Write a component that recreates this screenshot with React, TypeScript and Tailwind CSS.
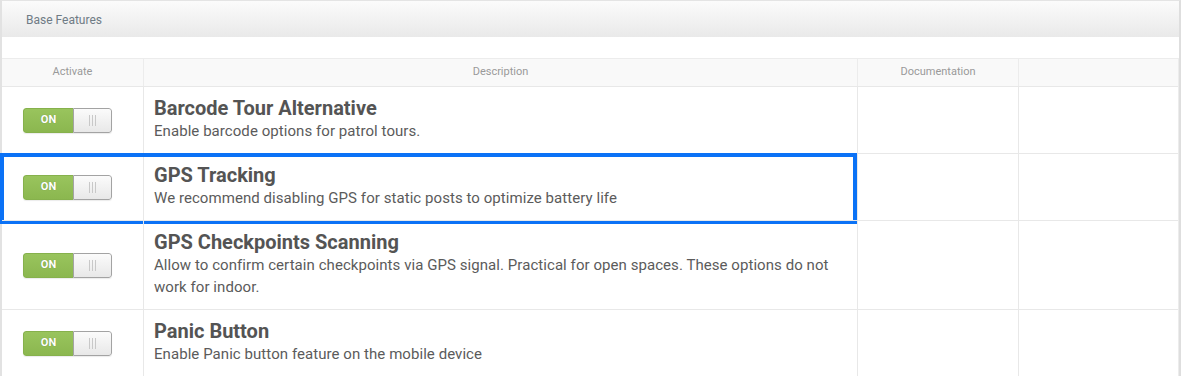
import React from "react";

type Feature = { title: string; text: string; highlight?: boolean };

const features: Feature[] = [
  { title: "Barcode Tour Alternative", text: "Enable barcode options for patrol tours." },
  {
    title: "GPS Tracking",
    text: "We recommend disabling GPS for static posts to optimize battery life",
    highlight: true,
  },
  {
    title: "GPS Checkpoints Scanning",
    text: "Allow to confirm certain checkpoints via GPS signal. Practical for open spaces. These options do not work for indoor.",
  },
  { title: "Panic Button", text: "Enable Panic button feature on the mobile device" },
];

function Toggle() {
  return (
    <div className="flex h-[25px] w-[89px] rounded-[3px] overflow-hidden shadow-[0_1px_1px_rgba(0,0,0,0.08)]">
      <div className="flex w-[50px] items-center justify-center bg-gradient-to-b from-[#99c45d] to-[#8bb74f] border border-r-0 border-[#86b14c] rounded-l-[3px] text-[11px] font-bold text-white [text-shadow:0_0_1px_rgba(0,0,0,0.25)]">
        ON
      </div>
      <div className="flex flex-1 items-center justify-center gap-[2px] bg-gradient-to-b from-[#fbfbfb] to-[#e8e8e8] border border-[#a3a3a3] rounded-r-[3px]">
        <span className="h-[11px] w-px bg-[#c8c8c8]" />
        <span className="h-[11px] w-px bg-[#c8c8c8]" />
        <span className="h-[11px] w-px bg-[#c8c8c8]" />
      </div>
    </div>
  );
}

function Row({ f }: { f: Feature }) {
  return (
    <div className="relative flex border-t border-[#e8e8e8]">
      <div className="flex w-[141px] shrink-0 items-center pl-[21px]">
        <Toggle />
      </div>
      <div className="w-[714px] shrink-0 border-l border-[#e8e8e8] pl-[10px] pr-[12px] pt-[9px] pb-[11px]">
        <div className="text-[20px] font-bold leading-[24px] text-[#545454]">{f.title}</div>
        <div className="text-[15px] leading-[22px] tracking-[0.06px] text-[#5b5b5b]">{f.text}</div>
      </div>
      <div className="w-[161px] shrink-0 border-l border-[#e8e8e8]" />
      <div className="flex-1 border-l border-[#e8e8e8]" />
      {f.highlight && (
        <div className="pointer-events-none absolute -left-[2px] -top-[1px] h-[71px] w-[857px] border-[4px] border-[#0b72f6]" />
      )}
    </div>
  );
}

export default function App() {
  return (
    <div className="h-[376px] w-[1181px] overflow-hidden bg-white font-['Roboto','Liberation_Sans',sans-serif]">
      <div className="h-full border-x-2 border-l-[#e2e2e2] border-r-[#dedede] border-t border-t-[#e4e4e4]">
        <div className="flex h-[36px] items-center bg-gradient-to-b from-[#fbfbfb] to-[#e9e9e9] pl-[24px] pt-[2px] text-[12px] text-[#6f7b85]">
          Base Features
        </div>
        <div className="h-[21px]" />
        <div className="border-r border-[#ececec]">
          <div className="flex h-[28px] border-t border-[#ececec] bg-[#f9f9f9] text-[11px] text-[#9a9a9a]">
            <div className="flex w-[141px] shrink-0 items-center justify-center">Activate</div>
            <div className="flex w-[714px] shrink-0 items-center justify-center border-l border-[#ececec]">
              Description
            </div>
            <div className="flex w-[161px] shrink-0 items-center justify-center border-l border-[#ececec]">
              Documentation
            </div>
            <div className="flex-1 border-l border-[#ececec]" />
          </div>
          {features.map((f) => (
            <Row key={f.title} f={f} />
          ))}
        </div>
      </div>
    </div>
  );
}
